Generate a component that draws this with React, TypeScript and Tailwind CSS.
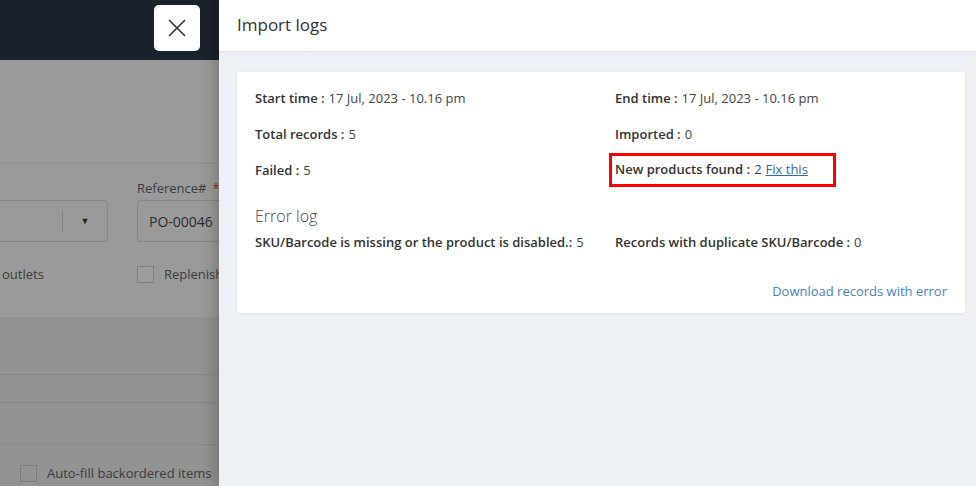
import React from 'react';

const font = { fontFamily: '"Open Sans", "Noto Sans", sans-serif' };

function Stat({ label, value, right }: { label: string; value: string; right?: boolean }) {
    return (
        <div className={`h-[36px] flex items-center ${right ? 'pl-[6px]' : ''}`}>
            <span className="font-semibold text-[#333]">{label}</span>
            <span className="ml-[4px] text-[#444]">{value}</span>
        </div>
    );
}

// Dimmed page behind the drawer
function BackdropPage() {
    return (
        <div className="w-[219px] shrink-0 flex flex-col overflow-hidden text-[#3d3d3d]">
            <div className="h-[60px] bg-[#19222d] flex justify-end items-start pt-[5px] pr-[19px]">
                <button className="w-[46px] h-[46px] bg-white rounded-[5px] flex items-center justify-center">
                    <svg width="20" height="20" viewBox="0 0 20 20" fill="none" stroke="#333" strokeWidth="1.6">
                        <path d="M2 2 L18 18 M18 2 L2 18" />
                    </svg>
                </button>
            </div>
            <div className="h-[104px] bg-[#9a9a9a] border-b border-[#8e8e8e]" />
            <div className="h-[153px] bg-[#9a9a9a]">
                <div className="flex gap-[29px] mt-[16px]">
                    <div className="w-[108px] shrink-0 pt-[20px]">
                        <div className="h-[42px] border border-[#888] border-l-0 rounded-r-[4px] flex items-center justify-end">
                            <div className="w-px h-[20px] bg-[#858585]" />
                            <div className="w-[44px] flex justify-center text-[9px] text-[#222]">▼</div>
                        </div>
                    </div>
                    <div className="flex-1">
                        <div className="h-[18px] flex items-center text-[13px] whitespace-nowrap">
                            Reference#<span className="ml-[6px] text-[#a42020]">*</span>
                        </div>
                        <div className="mt-[2px] h-[42px] border border-[#888] border-r-0 rounded-l-[4px] flex items-center pl-[11px] text-[14px] text-[#2e2e2e] whitespace-nowrap">
                            PO-00046
                        </div>
                    </div>
                </div>
                <div className="flex items-center mt-[23px] text-[13px] whitespace-nowrap">
                    <span className="w-[137px] shrink-0 pl-[2px]">outlets</span>
                    <span className="w-[17px] h-[17px] shrink-0 border border-[#828282] bg-[#9d9d9d]" />
                    <span className="ml-[10px] shrink-0">Replenish</span>
                </div>
            </div>
            <div className="flex-1 bg-[#929292] flex flex-col">
                <div className="h-[58px] border-b border-[#878787]" />
                <div className="h-[28px] border-b border-[#7f8787]" />
                <div className="h-[42px] border-b border-[#868989]" />
                <div className="flex items-center mt-[19px] text-[13px] whitespace-nowrap">
                    <span className="ml-[20px] w-[17px] h-[17px] shrink-0 border border-[#7e7e7e]" />
                    <span className="ml-[10px]">Auto-fill backordered items</span>
                </div>
            </div>
        </div>
    );
}

export default function App() {
    return (
        <div className="w-[976px] h-[486px] flex overflow-hidden" style={font}>
            <BackdropPage />
            <div className="flex-1 flex flex-col bg-[#edf0f4] shadow-[-6px_0_12px_rgba(0,0,0,0.18)] z-10">
                <div className="h-[52px] shrink-0 bg-white border-b border-[#dfe3e8] flex items-center px-[18px] pb-[1px]">
                    <h2 className="text-[17px] text-[#333]">Import logs</h2>
                </div>
                <div className="pt-[20px] pl-[18px] pr-[11px]">
                    <div className="bg-white rounded-[3px] shadow-[0_1px_3px_rgba(0,0,0,0.06)] px-[18px] pt-[9px] pb-[12px] text-[13px]">
                        <div className="grid grid-cols-[354px_1fr]">
                            <Stat label="Start time :" value="17 Jul, 2023 - 10.16 pm" />
                            <Stat label="End time :" value="17 Jul, 2023 - 10.16 pm" right />
                            <Stat label="Total records :" value="5" />
                            <Stat label="Imported :" value="0" right />
                            <Stat label="Failed :" value="5" />
                            <div className="h-[36px] flex">
                                <div className="h-[34px] w-[227px] border-[3px] border-[#ff0000] flex items-center pl-[3px]">
                                    <span className="font-semibold text-[#333]">New products found :</span>
                                    <span className="ml-[4px] text-[#444]">2</span>
                                    <a href="#" className="ml-[4px] text-[#2f6aa3] underline">Fix this</a>
                                </div>
                            </div>
                        </div>
                        <div className="mt-[15px] h-[24px] flex items-center text-[16px] font-light text-[#444]">Error log</div>
                        <div className="mt-[5px] grid grid-cols-[360px_1fr] h-[18px] items-center">
                            <div>
                                <span className="font-semibold text-[#333]">SKU/Barcode is missing or the product is disabled.:</span>
                                <span className="ml-[4px] text-[#444]">5</span>
                            </div>
                            <div>
                                <span className="font-semibold text-[#333]">Records with duplicate SKU/Barcode :</span>
                                <span className="ml-[4px] text-[#444]">0</span>
                            </div>
                        </div>
                        <div className="mt-[32px] h-[18px] flex justify-end items-center">
                            <a href="#" className="text-[#4a83bb]">Download records with error</a>
                        </div>
                    </div>
                </div>
            </div>
        </div>
    );
}
